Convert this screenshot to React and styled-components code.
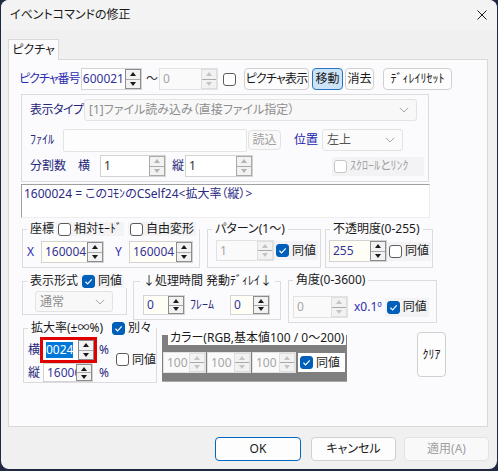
import React from 'react';
import styled, { createGlobalStyle, css } from 'styled-components';

const GlobalStyle = createGlobalStyle`
  html, body { margin: 0; padding: 0; }
  body {
    background: #1f2942;
    font-family: "Noto Sans", "Noto Sans CJK JP", sans-serif;
    font-size: 12px;
    color: #1a1a1a;
    font-feature-settings: "palt";
  }
  * { box-sizing: border-box; }
`;

const Window = styled.div`
  width: 496px;
  height: 469px;
  margin-left: 1px;
  background: #f0f0f0;
  border-radius: 8px;
  overflow: hidden;
  display: flex;
  flex-direction: column;
`;

const TitleBar = styled.div`
  flex: none;
  height: 30px;
  display: flex;
  align-items: center;
  justify-content: space-between;
  padding: 0 10px 0 9px;
  background: #f3f3f3;
`;

const TitleText = styled.span`
  font-size: 12px;
  line-height: 14px;
  color: #1a1a1a;
`;

const Body = styled.div`
  padding: 9px 9px 0 7px;
  display: flex;
  flex-direction: column;
`;

const TabStrip = styled.div`
  display: flex;
  height: 20px;
  position: relative;
  z-index: 1;
`;

const Tab = styled.div`
  width: 51px;
  height: 21px;
  border: 1px solid #d9d9d9;
  border-bottom: none;
  background: #fbfbfd;
  text-align: center;
  line-height: 20px;
  font-size: 12px;
`;

const Panel = styled.div`
  width: 480px;
  height: 368px;
  border: 1px solid #d9d9d9;
  background: #fbfbfd;
  display: flex;
  flex-direction: column;
`;

const Row = styled.div`
  flex: none;
  display: flex;
  align-items: ${p => p.$align || 'center'};
  height: ${p => (p.$h ? p.$h + 'px' : 'auto')};
  margin-top: ${p => p.$mt || 0}px;
  margin-left: ${p => p.$ml || 0}px;
`;

const Column = styled.div`
  flex: none;
  display: flex;
  flex-direction: column;
`;

const Label = styled.span`
  flex: none;
  display: inline-block;
  width: ${p => (p.$w ? p.$w + 'px' : 'auto')};
  margin-left: ${p => p.$ml || 0}px;
  color: ${p => p.$c || '#27277a'};
  font-size: ${p => p.$fs || 12}px;
  letter-spacing: ${p => p.$ls || 0}px;
  line-height: 14px;
  white-space: nowrap;
`;

const SpinBox = styled.div`
  flex: none;
  display: flex;
  width: ${p => p.$w}px;
  height: ${p => p.$h}px;
  margin-left: ${p => p.$ml || 0}px;
  border: ${p => (p.$bare ? 'none' : `1px solid ${p.$disabled ? '#e2e2e2' : '#d3d3d3'}`)};
  background: ${p => (p.$disabled ? '#fafafa' : p.$bg || '#fff')};
`;

const SpinValue = styled.div`
  flex: 1;
  min-width: 0;
  overflow: hidden;
  display: flex;
  align-items: center;
  justify-content: ${p => (p.$end ? 'flex-end' : 'flex-start')};
  padding: 0 ${p => (p.$end ? 1 : 0)}px 0 ${p => (p.$end ? 0 : 3)}px;
  color: ${p => (p.$disabled ? '#a6a6a6' : p.$c || '#34349a')};
  white-space: nowrap;
  line-height: 14px;
`;

const Selected = styled.span`
  background: #0078d7;
  color: #fff;
  padding: 1px 0;
`;

const SpinCol = styled.div`
  flex: none;
  width: 16px;
  display: flex;
  flex-direction: column;
  border: 1px solid ${p => (p.$tone === 'off' ? '#dedede' : p.$tone === 'dim' ? '#a9a9a9' : '#8c8c8c')};
  background: #f2f2f2;
`;

const SpinHalf = styled.div`
  flex: 1;
  display: flex;
  align-items: center;
  justify-content: center;
  & + & {
    border-top: 1px solid ${p => (p.$tone === 'off' ? '#dedede' : p.$tone === 'dim' ? '#a9a9a9' : '#8c8c8c')};
  }
`;

const Arrow = styled.span`
  width: 0;
  height: 0;
  border-left: 3.5px solid transparent;
  border-right: 3.5px solid transparent;
  ${p =>
    p.$down
      ? css`border-top: 4px solid ${p.$color};`
      : css`border-bottom: 4px solid ${p.$color};`}
`;

const RedFrame = styled.div`
  flex: none;
  width: 57px;
  height: 26px;
  border: 3px solid #e00000;
  background: #fff;
  display: flex;
`;

const CheckWrap = styled.span`
  flex: none;
  display: inline-flex;
  align-items: center;
  gap: 3px;
  height: ${p => p.$h || 14}px;
  width: ${p => (p.$w ? p.$w + 'px' : 'auto')};
  margin-left: ${p => p.$ml || 0}px;
  padding: ${p => (p.$plain ? '0' : '0 2px')};
  background: ${p => p.$bg || 'transparent'};
  color: ${p => (p.$disabled ? '#a3a3a3' : '#1a1a1a')};
  font-size: ${p => p.$fs || 12}px;
  line-height: 14px;
  white-space: nowrap;
`;

const Box = styled.span`
  flex: none;
  width: 13px;
  height: 13px;
  border-radius: 3px;
  border: 1px solid ${p => (p.$checked ? '#005fb8' : p.$disabled ? '#c6c6c6' : '#5c5c5c')};
  background: ${p => (p.$checked ? '#005fb8' : '#fff')};
  display: flex;
  align-items: center;
  justify-content: center;
`;

const ComboBox = styled.div`
  flex: none;
  width: ${p => p.$w}px;
  height: ${p => p.$h}px;
  margin-left: ${p => p.$ml || 0}px;
  display: flex;
  align-items: center;
  justify-content: space-between;
  padding: 0 7px 0 4px;
  border: 1px solid #e3e3e3;
  border-radius: 3px;
  background: ${p => (p.$disabled ? '#f8f8f8' : '#fbfbfb')};
  color: ${p => (p.$disabled ? '#8e8e8e' : '#555')};
  white-space: nowrap;
  line-height: 14px;
`;

const TextBox = styled.div`
  flex: none;
  width: ${p => p.$w}px;
  height: ${p => p.$h}px;
  margin-left: ${p => p.$ml || 0}px;
  align-self: flex-end;
  border: 1px solid #e4e4e4;
  border-radius: 2px;
  background: #fdfdfd;
`;

const Btn = styled.button`
  flex: none;
  width: ${p => p.$w}px;
  height: ${p => p.$h || 22}px;
  margin-left: ${p => p.$ml || 0}px;
  margin-top: ${p => p.$mt || 0}px;
  padding: 0;
  font: inherit;
  font-size: 12px;
  line-height: 14px;
  letter-spacing: ${p => p.$ls || 0}px;
  color: #1a1a1a;
  background: #fdfdfd;
  border: 1px solid #d0d0d0;
  border-radius: 4px;
  white-space: nowrap;
  ${p =>
    p.$active &&
    css`
      background: #cce4f7;
      border-color: #2a74c0;
    `}
  ${p =>
    p.$primary &&
    css`
      border-color: #0067c0;
    `}
  ${p =>
    p.$off &&
    css`
      color: #a0a0a0;
      background: #f9f9f9;
      border-color: #e3e3e3;
    `}
`;

const GroupBox = styled.div`
  flex: none;
  width: 408px;
  height: 88px;
  margin: 4px 0 0 12px;
  border: 1px solid #dcdcdc;
  display: flex;
  flex-direction: column;
`;

const InfoText = styled.div`
  flex: none;
  width: 409px;
  height: 34px;
  margin: 2px 0 0 12px;
  padding: 2px 2px;
  background: #fff;
  border-top: 1px solid #a0a0a0;
  border-left: 1px solid #a0a0a0;
  border-right: 1px solid #eeeeee;
  border-bottom: 1px solid #eeeeee;
  color: #2b2b84;
  line-height: 14px;
  white-space: nowrap;
`;

const Group = styled.fieldset`
  flex: none;
  margin: ${p => p.$mt || 0}px 0 0 ${p => p.$ml || 0}px;
  width: ${p => p.$w}px;
  height: ${p => p.$h}px;
  padding: 0 4px;
  border: 1px solid #dcdcdc;
  min-width: 0;
`;

const Legend = styled.legend`
  padding: 0 3px;
  margin-left: ${p => p.$ml || 0}px;
  height: 14px;
  line-height: 14px;
  font-size: 12px;
  color: #1a1a1a;
  white-space: nowrap;
`;

const LegendInner = styled.span`
  display: inline-flex;
  align-items: center;
  height: 14px;
`;

const ColorFrame = styled.div`
  flex: none;
  width: 185px;
  height: 47px;
  margin: 14px 0 0 5px;
  background: #7f7f7f;
  border-bottom: 1px solid #a8a8a8;
  display: flex;
  flex-direction: column;
`;

const ColorTitle = styled.span`
  flex: none;
  align-self: flex-start;
  margin: -4px 0 0 6px;
  height: 14px;
  padding: 0 2px;
  background: #fff;
  line-height: 14px;
  white-space: nowrap;
`;

const Footer = styled.div`
  display: flex;
  justify-content: flex-end;
  margin: 10px -1px 0 0;
`;

const ok = '#1a1a1a';

function Spin({ w, h = 22, ml, value, disabled, end, tone, bg, c, bare, children }) {
  const t = tone || (disabled ? 'off' : 'on');
  const color = t === 'off' ? '#c4c4c4' : t === 'dim' ? '#b3b3b3' : ok;
  return (
    <SpinBox $w={w} $h={h} $ml={ml} $disabled={disabled} $bg={bg} $bare={bare}>
      <SpinValue $disabled={disabled} $end={end} $c={c}>
        {children || value}
      </SpinValue>
      <SpinCol $tone={t}>
        <SpinHalf $tone={t}>
          <Arrow $color={color} />
        </SpinHalf>
        <SpinHalf $tone={t}>
          <Arrow $down $color={color} />
        </SpinHalf>
      </SpinCol>
    </SpinBox>
  );
}

function Check({ checked, disabled, label, ml, bg, h, w, fs, plain }) {
  return (
    <CheckWrap $ml={ml} $bg={bg} $h={h} $w={w} $disabled={disabled} $fs={fs} $plain={plain || !label}>
      <Box $checked={checked} $disabled={disabled}>
        {checked && (
          <svg width="9" height="9" viewBox="0 0 10 10">
            <path d="M1.6 5.3 L4 7.6 L8.6 2.6" stroke="#fff" strokeWidth="1.3" fill="none" />
          </svg>
        )}
      </Box>
      {label}
    </CheckWrap>
  );
}

function Combo({ w, h, ml, value, disabled }) {
  return (
    <ComboBox $w={w} $h={h} $ml={ml} $disabled={disabled}>
      <span>{value}</span>
      <svg width="10" height="6" viewBox="0 0 10 6">
        <path d="M0.8 0.8 L5 5 L9.2 0.8" stroke="#a8a8a8" strokeWidth="1" fill="none" />
      </svg>
    </ComboBox>
  );
}

const cream = '#fffef6';
const chk = '#f3f3f5';
const blue = '#2c2cae';

export default function App() {
  return (
    <>
      <GlobalStyle />
      <Window>
        <TitleBar>
          <TitleText>イベントコマンドの修正</TitleText>
          <svg width="10" height="10" viewBox="0 0 10 10">
            <path d="M0.5 0.5 L9.5 9.5 M9.5 0.5 L0.5 9.5" stroke="#1a1a1a" strokeWidth="1" />
          </svg>
        </TitleBar>
        <Body>
          <TabStrip>
            <Tab>ピクチャ</Tab>
          </TabStrip>
          <Panel>
            <Row $mt={8} $h={22}>
              <Label $w={62} $ml={10} $c={blue} $ls={-1}>ピクチャ番号</Label>
              <Spin w={61} value="1600021" end />
              <Label $w={13} $ml={4} $c="#333">〜</Label>
              <Spin w={59} value="0" disabled />
              <Check ml={5} />
              <Btn $w={65} $ml={8} $ls={-0.8}>ピクチャ表示</Btn>
              <Btn $w={31} $ml={3} $active>移動</Btn>
              <Btn $w={29} $ml={2}>消去</Btn>
              <Btn $w={69} $ml={9}>ﾃﾞｨﾚｲﾘｾｯﾄ</Btn>
            </Row>

            <GroupBox>
              <Row $mt={4} $h={22}>
                <Label $w={54} $ml={8} $ls={-0.5}>表示タイプ</Label>
                <Combo w={333} h={22} value="[1]ファイル読み込み（直接ファイル指定）" disabled />
              </Row>
              <Row $mt={6} $h={25}>
                <Label $w={33} $ml={8}>ﾌｧｲﾙ</Label>
                <TextBox $w={184} $h={23} />
                <Btn $w={33} $h={20} $ml={1} $off>読込</Btn>
                <Label $w={28} $ml={13} $c="#1c1caa">位置</Label>
                <Combo w={81} h={22} value="左上" />
              </Row>
              <Row $mt={3} $h={22}>
                <Label $w={48} $ml={8}>分割数</Label>
                <Label $w={22}>横</Label>
                <Spin w={66} value="1" c="#333" tone="dim" />
                <Label $w={13} $ml={6}>縦</Label>
                <Spin w={68} value="1" c="#333" tone="dim" />
                <Check ml={79} w={92} h={19} bg={chk} disabled label="ｽｸﾛｰﾙとﾘﾝｸ" />
              </Row>
            </GroupBox>

            <InfoText>1600024 = このｺﾓﾝのCSelf24&lt;拡大率（縦）&gt;</InfoText>

            <Row $mt={4} $h={46} $align="flex-start">
              <Group $ml={13} $w={178} $h={46}>
                <Legend>
                  <LegendInner>
                    座標
                    <Check ml={2} bg={chk} label="相対ﾓｰﾄﾞ" />
                    <Check ml={4} bg={chk} label="自由変形" />
                  </LegendInner>
                </Legend>
                <Row $mt={5}>
                  <Label $w={14} $c={blue}>X</Label>
                  <Spin w={63} value="160004" bg={cream} />
                  <Label $w={14} $ml={11} $c={blue}>Y</Label>
                  <Spin w={64} value="160004" bg={cream} />
                </Row>
              </Group>
              <Group $ml={7} $w={114} $h={46}>
                <Legend>パターン(1〜)</Legend>
                <Row $mt={4}>
                  <Spin w={58} h={21} ml={4} value="1" disabled />
                  <Check checked bg={chk} h={19} label="同値" />
                </Row>
              </Group>
              <Group $ml={4} $w={108} $h={46}>
                <Legend>不透明度(0-255)</Legend>
                <Row $mt={4}>
                  <Spin w={58} ml={-1} value="255" bg={cream} />
                  <Check bg={chk} h={19} label="同値" />
                </Row>
              </Group>
            </Row>

            <Row $mt={6} $h={47} $align="flex-start">
              <Group $ml={13} $w={105} $h={41}>
                <Legend>
                  <LegendInner>
                    表示形式
                    <Check ml={2} checked bg={chk} label="同値" />
                  </LegendInner>
                </Legend>
                <Row $mt={3}>
                  <Combo w={78} h={21} ml={8} value="通常" disabled />
                </Row>
              </Group>
              <Group $ml={6} $w={148} $h={46}>
                <Legend $ml={2}>↓処理時間 発動ﾃﾞｨﾚｲ↓</Legend>
                <Row $mt={7}>
                  <Spin w={42} h={20} ml={5} value="0" bg={cream} />
                  <Label $w={24} $ml={5}>ﾌﾚｰﾑ</Label>
                  <Spin w={40} h={20} ml={16} value="0" bg={cream} />
                </Row>
              </Group>
              <Group $ml={7} $mt={-1} $w={149} $h={50}>
                <Legend>角度(0-3600)</Legend>
                <Row $mt={9}>
                  <Spin w={55} value="0" disabled />
                  <Label $ml={6} $c={blue}>x0.1º</Label>
                  <Check ml={3} checked bg={chk} h={19} label="同値" />
                </Row>
              </Group>
            </Row>

            <Row $h={62} $align="flex-start">
              <Group $ml={14} $w={134} $h={62}>
                <Legend>
                  <LegendInner>
                    拡大率(±∞%)
                    <Check ml={7} checked label="別々" />
                  </LegendInner>
                </Legend>
                <Row $mt={2}>
                  <Column>
                    <Row>
                      <Label $w={12} $c="#27277a">横</Label>
                      <RedFrame>
                        <Spin w={51} h={20} bare>
                          <Selected>0024</Selected>
                        </Spin>
                      </RedFrame>
                      <Label $ml={2} $c="#27277a">%</Label>
                    </Row>
                    <Row>
                      <Label $w={15} $c="#27277a">縦</Label>
                      <Spin w={50} h={19} value="1600024" />
                      <Label $ml={6} $c="#27277a">%</Label>
                    </Row>
                  </Column>
                  <Check ml={5} label="同値" />
                </Row>
              </Group>

              <ColorFrame>
                <ColorTitle>カラー(RGB,基本値100 / 0〜200)</ColorTitle>
                <Row $mt={7}>
                  <Spin w={43} h={21} ml={1} value="100" disabled />
                  <Spin w={44} h={21} ml={1} value="100" disabled />
                  <Spin w={44} h={21} ml={1} value="100" disabled />
                  <Check ml={2} w={47} h={19} bg="#fff" checked label="同値" />
                </Row>
              </ColorFrame>

              <Btn $w={29} $h={45} $ml={70} $mt={11}>ｸﾘｱ</Btn>
            </Row>
          </Panel>
          <Footer>
            <Btn $w={86} $h={24} $primary>OK</Btn>
            <Btn $w={85} $h={24} $ml={10}>キャンセル</Btn>
            <Btn $w={85} $h={24} $ml={8} $off>適用(A)</Btn>
          </Footer>
        </Body>
      </Window>
    </>
  );
}
